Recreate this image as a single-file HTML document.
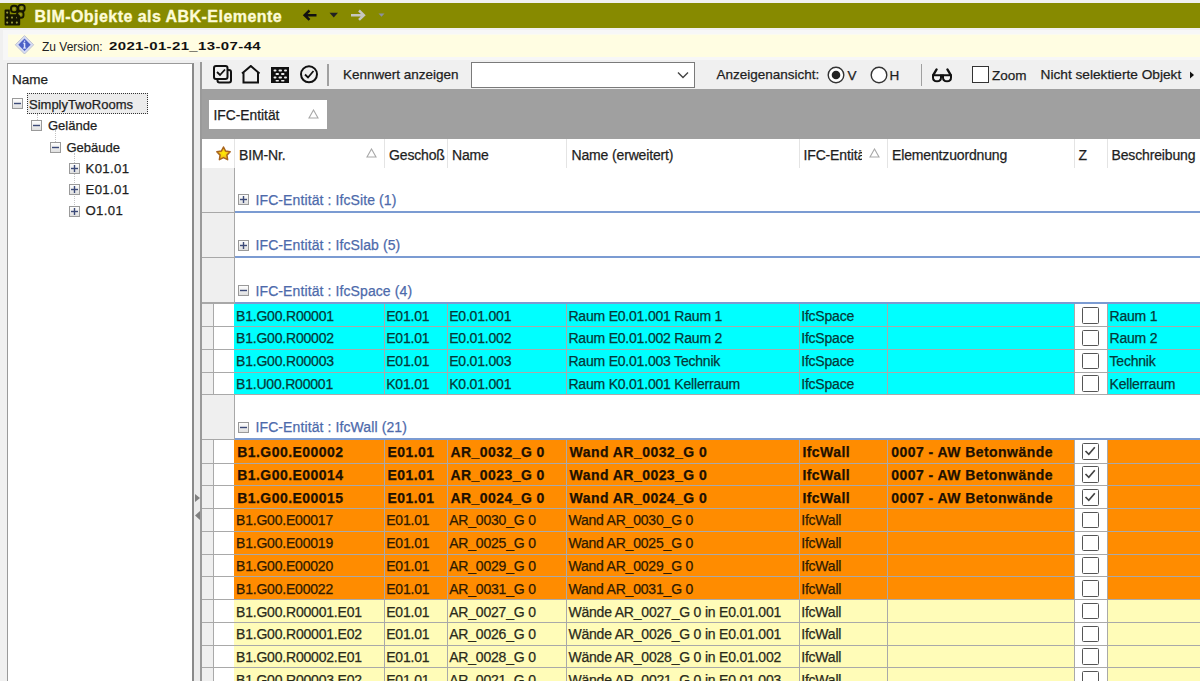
<!DOCTYPE html><html><head><meta charset='utf-8'><style>
*{margin:0;padding:0;box-sizing:border-box}
html,body{width:1200px;height:681px;overflow:hidden;background:#f0f0f0;font-family:"Liberation Sans", sans-serif;}
.a{position:absolute;white-space:nowrap}
.t{position:absolute;white-space:nowrap;font-size:13.5px;line-height:16px;color:#1e1e1e;-webkit-text-stroke:0.25px currentColor}
.hl{position:absolute;background:#a9a9a9;height:1px}
.vl{position:absolute;background:#a9a9a9;width:1px}
</style></head><body>
<div class='a' style='left:0;top:3px;width:1200px;height:24.5px;background:#878a00'></div>
<svg class='a' style='left:0;top:0' width='30' height='30' viewBox='0 0 30 30'>
<path d='M4.6 10.2 Q4.6 9.4 5.4 9.4 H9.8 V14.2 H19.4 Q20.2 14.2 20.2 15 V24.6 Q20.2 25.4 19.4 25.4 H5.4 Q4.6 25.4 4.6 24.6 Z' fill='#161600'/>
<g fill='#9a9c3a'><circle cx='7.2' cy='12.6' r='1.05'/><circle cx='7.2' cy='17.6' r='1.05'/><circle cx='12' cy='17.6' r='1.05'/><circle cx='16.8' cy='17.6' r='0.8'/>
<circle cx='7.2' cy='22.6' r='1.05'/><circle cx='12' cy='22.6' r='1.05'/><circle cx='16.8' cy='22.6' r='1.05'/></g>
<g fill='none' stroke='#161600' stroke-width='1.9'><rect x='11' y='5.7' width='6.4' height='6.4' rx='2.6'/><rect x='18.3' y='4.9' width='6.4' height='6.4' rx='2.6'/><rect x='17.1' y='11.4' width='6.4' height='6.4' rx='2.6'/></g>
<g fill='#9a9c3a'><circle cx='14.2' cy='8.9' r='1.1'/><circle cx='21.5' cy='8.1' r='1.1'/><circle cx='20.3' cy='14.6' r='1.1'/></g>
</svg>
<div class='a' style='left:34.5px;top:7px;font-size:16px;line-height:19px;font-weight:bold;color:#fdfbd6;letter-spacing:0.45px;-webkit-text-stroke:0.35px #fdfbd6'>BIM-Objekte als ABK-Elemente</div>
<svg class='a' style='left:300px;top:5px' width='90' height='20' viewBox='300 5 90 20'>
<path d='M304.5 15.2 H316.5 M309.5 10.5 L304.6 15.2 L309.5 19.9' stroke='#111' stroke-width='2.5' fill='none'/>
<path d='M329.5 12.8 H338 L333.75 17.6 Z' fill='#222'/>
<path d='M351 15.2 H364 M359 10.5 L363.9 15.2 L359 19.9' stroke='#c6c6c0' stroke-width='2.5' fill='none'/>
<path d='M378.5 13.5 H384.5 L381.5 16.8 Z' fill='#8c90a0'/>
</svg>
<div class='a' style='left:3px;top:29.5px;width:1197px;height:30px;background:#f7f7f7'></div>
<div class='a' style='left:7.5px;top:34px;width:1192.5px;height:22.5px;background:#fffde2;border-top:1px solid #fbfbf0'></div>
<svg class='a' style='left:0;top:30px' width='40' height='30' viewBox='0 30 40 30'>
<path d='M24.5 35.6 L33.7 44.8 L24.5 54 L15.3 44.8 Z' fill='#d6dcf4' stroke='#b4b8c8' stroke-width='0.8'/>
<path d='M24.5 38.6 L30.7 44.8 L24.5 51 L18.3 44.8 Z' fill='#4b60c6'/>
<rect x='23.8' y='43' width='1.5' height='5.2' fill='#dfe6ff'/><rect x='22.9' y='42.6' width='2.2' height='1' fill='#dfe6ff'/><rect x='23' y='47.6' width='3.2' height='1' fill='#dfe6ff'/><rect x='23.9' y='40.6' width='1.3' height='1.2' fill='#dfe6ff'/>
</svg>
<div class='a' style='left:42px;top:39.5px;font-size:12px;line-height:14px;color:#222'>Zu Version:</div>
<div class='a' style='left:109px;top:38px;font-size:11.5px;line-height:16px;font-weight:bold;color:#111;letter-spacing:0.3px;transform:scaleX(1.3);transform-origin:0 0'>2021-01-21_13-07-44</div>
<div class='a' style='left:7px;top:62.5px;width:186.5px;height:640px;background:#fff;border:1px solid #9a9a9a;border-right:2px solid #8a8a8a'></div>
<div class='t' style='left:12px;top:71.5px;font-size:13.5px'>Name</div>
<div class='a' style='left:36.5px;top:114px;width:0;height:6px;border-left:1px dotted #c4c4c4'></div>
<div class='a' style='left:55px;top:130px;width:0;height:12px;border-left:1px dotted #c4c4c4'></div>
<div class='a' style='left:74px;top:153px;width:0;height:58px;border-left:1px dotted #c4c4c4'></div>
<svg class='a' style='left:12px;top:98px' width='11' height='11' viewBox='0 0 11 11'><defs><linearGradient id='gb' x1='0' y1='0' x2='0' y2='1'><stop offset='0' stop-color='#fff'/><stop offset='1' stop-color='#dedede'/></linearGradient></defs><rect x='0.5' y='0.5' width='10' height='10' fill='url(#gb)' stroke='#9a9a9a'/><rect x='2' y='4.8' width='7' height='1.4' fill='#3c4a78'/></svg>
<div class='a' style='left:27px;top:93px;width:121px;height:21px;border:1px dotted #333;background:#ececec'></div>
<div class='t' style='left:29px;top:96.5px;font-size:13px'>SimplyTwoRooms</div>
<svg class='a' style='left:31px;top:120px' width='11' height='11' viewBox='0 0 11 11'><defs><linearGradient id='gb' x1='0' y1='0' x2='0' y2='1'><stop offset='0' stop-color='#fff'/><stop offset='1' stop-color='#dedede'/></linearGradient></defs><rect x='0.5' y='0.5' width='10' height='10' fill='url(#gb)' stroke='#9a9a9a'/><rect x='2' y='4.8' width='7' height='1.4' fill='#3c4a78'/></svg>
<div class='t' style='left:48px;top:117.5px;font-size:13px'>Gelände</div>
<svg class='a' style='left:50px;top:142px' width='11' height='11' viewBox='0 0 11 11'><defs><linearGradient id='gb' x1='0' y1='0' x2='0' y2='1'><stop offset='0' stop-color='#fff'/><stop offset='1' stop-color='#dedede'/></linearGradient></defs><rect x='0.5' y='0.5' width='10' height='10' fill='url(#gb)' stroke='#9a9a9a'/><rect x='2' y='4.8' width='7' height='1.4' fill='#3c4a78'/></svg>
<div class='t' style='left:66.5px;top:139.5px;font-size:13px'>Gebäude</div>
<svg class='a' style='left:69px;top:163px' width='11' height='11' viewBox='0 0 11 11'><defs><linearGradient id='gb' x1='0' y1='0' x2='0' y2='1'><stop offset='0' stop-color='#fff'/><stop offset='1' stop-color='#dedede'/></linearGradient></defs><rect x='0.5' y='0.5' width='10' height='10' fill='url(#gb)' stroke='#9a9a9a'/><rect x='2' y='4.8' width='7' height='1.4' fill='#3c4a78'/><rect x='4.8' y='2' width='1.4' height='7' fill='#3c4a78'/></svg>
<div class='t' style='left:85.5px;top:160.8px;font-size:13.2px;letter-spacing:0.35px'>K01.01</div>
<svg class='a' style='left:69px;top:184px' width='11' height='11' viewBox='0 0 11 11'><defs><linearGradient id='gb' x1='0' y1='0' x2='0' y2='1'><stop offset='0' stop-color='#fff'/><stop offset='1' stop-color='#dedede'/></linearGradient></defs><rect x='0.5' y='0.5' width='10' height='10' fill='url(#gb)' stroke='#9a9a9a'/><rect x='2' y='4.8' width='7' height='1.4' fill='#3c4a78'/><rect x='4.8' y='2' width='1.4' height='7' fill='#3c4a78'/></svg>
<div class='t' style='left:85.5px;top:182.10000000000002px;font-size:13.2px;letter-spacing:0.35px'>E01.01</div>
<svg class='a' style='left:69px;top:206px' width='11' height='11' viewBox='0 0 11 11'><defs><linearGradient id='gb' x1='0' y1='0' x2='0' y2='1'><stop offset='0' stop-color='#fff'/><stop offset='1' stop-color='#dedede'/></linearGradient></defs><rect x='0.5' y='0.5' width='10' height='10' fill='url(#gb)' stroke='#9a9a9a'/><rect x='2' y='4.8' width='7' height='1.4' fill='#3c4a78'/><rect x='4.8' y='2' width='1.4' height='7' fill='#3c4a78'/></svg>
<div class='t' style='left:85.5px;top:203.4px;font-size:13.2px;letter-spacing:0.35px'>O1.01</div>
<div class='a' style='left:193.5px;top:62px;width:6.5px;height:619px;background:#ececec'></div>
<svg class='a' style='left:194px;top:493px' width='7' height='28' viewBox='0 0 7 28'>
<path d='M1 1 L6 5 L1 9 Z' fill='#808080'/><path d='M6 18 L1 22.5 L6 27 Z' fill='#808080'/></svg>
<div class='a' style='left:199.8px;top:62px;width:2px;height:619px;background:#9a9a9a'></div>
<div class='a' style='left:202px;top:62px;width:998px;height:26.5px;background:#f0f0f0'></div>
<svg class='a' style='left:213px;top:65px' width='110' height='19' viewBox='0 0 110 19'>
<rect x='4.5' y='5' width='13.5' height='12.5' rx='2' fill='none' stroke='#111' stroke-width='2'/>
<rect x='1' y='1' width='13.5' height='13' rx='2' fill='#f0f0f0' stroke='#111' stroke-width='2'/>
<path d='M4 7 L7 10 L12 4.5' fill='none' stroke='#111' stroke-width='1.8'/>
<path d='M29 8.5 L37.8 1 L46.5 8.5 M30.5 7.5 V17.5 H45 V7.5' fill='none' stroke='#111' stroke-width='2'/>
<rect x='58' y='2' width='18' height='16' fill='#111'/>
<g fill='#f0f0f0'><rect x='60.5' y='4.5' width='3' height='2' rx='1'/><rect x='65.5' y='4.5' width='3.5' height='2' rx='1'/><rect x='71' y='4.5' width='3' height='2' rx='1'/>
<rect x='62.5' y='8' width='3.5' height='2' rx='1'/><rect x='68' y='8' width='3.5' height='2' rx='1'/>
<rect x='60.5' y='11.5' width='3' height='2' rx='1'/><rect x='65.5' y='11.5' width='3.5' height='2' rx='1'/><rect x='71' y='11.5' width='3' height='2' rx='1'/>
<rect x='62.5' y='15' width='3.5' height='1.6' rx='0.8'/><rect x='68' y='15' width='3.5' height='1.6' rx='0.8'/></g>
<circle cx='96' cy='9.3' r='8' fill='none' stroke='#111' stroke-width='2'/>
<path d='M92 9.5 L95 12.5 L100.5 6' fill='none' stroke='#111' stroke-width='1.8'/>
</svg>
<div class='a' style='left:327px;top:64px;width:1.5px;height:22px;background:#a0a0a0'></div>
<div class='t' style='left:343px;top:67px;font-size:13.5px'>Kennwert anzeigen</div>
<div class='a' style='left:470.5px;top:62px;width:224px;height:25.5px;background:#fff;border:1px solid #7a7a7a'></div>
<svg class='a' style='left:677px;top:71px' width='12' height='8' viewBox='0 0 12 8'><path d='M1 1.5 L6 6.5 L11 1.5' fill='none' stroke='#444' stroke-width='1.4'/></svg>
<div class='t' style='left:716.5px;top:67px;font-size:13.5px'>Anzeigenansicht:</div>
<svg class='a' style='left:827px;top:65.5px' width='18' height='18' viewBox='0 0 18 18'><circle cx='9' cy='9' r='7.8' fill='#fff' stroke='#333' stroke-width='1.4'/><circle cx='9' cy='9' r='4.3' fill='#222'/></svg>
<div class='t' style='left:847.5px;top:67.5px;font-size:13.5px'>V</div>
<svg class='a' style='left:869.5px;top:65.5px' width='18' height='18' viewBox='0 0 18 18'><circle cx='9' cy='9' r='7.8' fill='#fff' stroke='#333' stroke-width='1.4'/></svg>
<div class='t' style='left:889.5px;top:67.5px;font-size:13.5px'>H</div>
<div class='a' style='left:920.5px;top:64px;width:1.5px;height:22px;background:#a0a0a0'></div>
<svg class='a' style='left:926px;top:62px' width='32' height='26' viewBox='0 0 32 26'>
<path d='M10.6 7.4 L7.2 13.2 M21.4 7.4 L24.8 13.2' stroke='#111' stroke-width='2.3' stroke-linecap='round' fill='none'/>
<path d='M7 13.3 H15 V15.4 Q15 19.2 11 19.2 Q7 19.2 7 15.4 Z M17 13.3 H25 V15.4 Q25 19.2 21 19.2 Q17 19.2 17 15.4 Z' stroke='#111' stroke-width='2' fill='#f4f4f4' stroke-linejoin='round'/>
<path d='M14.5 13.6 H17.5' stroke='#111' stroke-width='2.6'/>
</svg>
<div class='a' style='left:972px;top:66px;width:16.5px;height:16.5px;background:#fff;border:1.5px solid #333'></div>
<div class='t' style='left:992px;top:67.5px;font-size:13.5px'>Zoom</div>
<div class='t' style='left:1040.5px;top:67px;font-size:13.7px'>Nicht selektierte Objekt</div>
<svg class='a' style='left:1189px;top:71px' width='6' height='8' viewBox='0 0 6 8'><path d='M1 0.5 L5 4 L1 7.5 Z' fill='#111'/></svg>
<div class='a' style='left:202px;top:88.5px;width:998px;height:50px;background:#a0a0a0'></div>
<div class='a' style='left:209px;top:100px;width:117.5px;height:28.5px;background:#fff'></div>
<div class='t' style='left:213.5px;top:107.5px;font-size:13.8px'>IFC-Entität</div>
<svg class='a' style='left:308px;top:109px' width='11' height='10' viewBox='0 0 11 10'><path d='M5.5 1 L10 9 H1 Z' fill='none' stroke='#a8a8a8' stroke-width='1.1'/></svg>
<div class='a' style='left:202px;top:138.5px;width:998px;height:30px;background:#fff'></div>
<svg class='a' style='left:216px;top:145.5px' width='15' height='15' viewBox='0 0 15 15'><defs><radialGradient id='sg' cx='0.5' cy='0.5' r='0.5'><stop offset='0' stop-color='#ffee00'/><stop offset='1' stop-color='#f0b020'/></radialGradient></defs><path d='M7.50 1.00 L9.62 5.09 L14.16 5.84 L10.92 9.11 L11.61 13.66 L7.50 11.60 L3.39 13.66 L4.08 9.11 L0.84 5.84 L5.38 5.09 Z' fill='url(#sg)' stroke='#a8641e' stroke-width='1.5' stroke-linejoin='round'/></svg>
<div class='a' style='left:233.5px;top:138.5px;width:1px;height:29.5px;background:#e4e4e4'></div>
<div class='a' style='left:384.2px;top:138.5px;width:1px;height:29.5px;background:#e4e4e4'></div>
<div class='a' style='left:447px;top:138.5px;width:1px;height:29.5px;background:#e4e4e4'></div>
<div class='a' style='left:566px;top:138.5px;width:1px;height:29.5px;background:#e4e4e4'></div>
<div class='a' style='left:798.5px;top:138.5px;width:1px;height:29.5px;background:#e4e4e4'></div>
<div class='a' style='left:886.7px;top:138.5px;width:1px;height:29.5px;background:#e4e4e4'></div>
<div class='a' style='left:1074px;top:138.5px;width:1px;height:29.5px;background:#e4e4e4'></div>
<div class='a' style='left:1106.7px;top:138.5px;width:1px;height:29.5px;background:#e4e4e4'></div>
<div class='t' style='left:239px;top:146.5px;font-size:14px;letter-spacing:-0.15px'>BIM-Nr.</div>
<div class='t' style='left:389px;top:146.5px;font-size:14px;letter-spacing:-0.15px'>Geschoß</div>
<div class='t' style='left:452px;top:146.5px;font-size:14px;letter-spacing:-0.15px'>Name</div>
<div class='t' style='left:571.5px;top:146.5px;font-size:14px;letter-spacing:-0.15px'>Name (erweitert)</div>
<div class='t' style='left:803.5px;top:146.5px;width:58.5px;overflow:hidden;font-size:14px;letter-spacing:-0.15px'>IFC-Entitä</div>
<div class='t' style='left:892px;top:146.5px;font-size:14px;letter-spacing:-0.15px'>Elementzuordnung</div>
<div class='t' style='left:1078.5px;top:146.5px;font-size:14px;letter-spacing:-0.15px'>Z</div>
<div class='t' style='left:1111.5px;top:146.5px;font-size:14px;letter-spacing:-0.15px'>Beschreibung</div>
<svg class='a' style='left:366px;top:148px' width='11' height='10' viewBox='0 0 11 10'><path d='M5.5 1 L10 9 H1 Z' fill='none' stroke='#a8a8a8' stroke-width='1.1'/></svg>
<svg class='a' style='left:868.5px;top:148px' width='11' height='10' viewBox='0 0 11 10'><path d='M5.5 1 L10 9 H1 Z' fill='none' stroke='#a8a8a8' stroke-width='1.1'/></svg>
<div class='a' style='left:202px;top:167.6px;width:998px;height:513.4px;background:#fff'></div>
<div class='a' style='left:202px;top:167.6px;width:31.5px;height:45.4px;background:#efefef'></div>
<div class='a' style='left:233.5px;top:167.6px;width:1px;height:45.4px;background:#a8a8a8'></div>
<div class='a' style='left:202px;top:211.6px;width:31.5px;height:1.2px;background:#a8a8a8'></div>
<div class='a' style='left:234.5px;top:210.8px;width:966px;height:2px;background:#7b9bd2'></div>
<svg class='a' style='left:238px;top:194px' width='11' height='11' viewBox='0 0 11 11'><defs><linearGradient id='gb' x1='0' y1='0' x2='0' y2='1'><stop offset='0' stop-color='#fff'/><stop offset='1' stop-color='#dedede'/></linearGradient></defs><rect x='0.5' y='0.5' width='10' height='10' fill='url(#gb)' stroke='#9a9a9a'/><rect x='2' y='4.8' width='7' height='1.4' fill='#3c4a78'/><rect x='4.8' y='2' width='1.4' height='7' fill='#3c4a78'/></svg>
<div class='t' style='left:255.5px;top:192.0px;font-size:14px;letter-spacing:0.1px;color:#4d6aab'>IFC-Entität : IfcSite (1)</div>
<div class='a' style='left:202px;top:213.0px;width:31.5px;height:45.4px;background:#efefef'></div>
<div class='a' style='left:233.5px;top:213.0px;width:1px;height:45.4px;background:#a8a8a8'></div>
<div class='a' style='left:202px;top:257.0px;width:31.5px;height:1.2px;background:#a8a8a8'></div>
<div class='a' style='left:234.5px;top:256.2px;width:966px;height:2px;background:#7b9bd2'></div>
<svg class='a' style='left:238px;top:240px' width='11' height='11' viewBox='0 0 11 11'><defs><linearGradient id='gb' x1='0' y1='0' x2='0' y2='1'><stop offset='0' stop-color='#fff'/><stop offset='1' stop-color='#dedede'/></linearGradient></defs><rect x='0.5' y='0.5' width='10' height='10' fill='url(#gb)' stroke='#9a9a9a'/><rect x='2' y='4.8' width='7' height='1.4' fill='#3c4a78'/><rect x='4.8' y='2' width='1.4' height='7' fill='#3c4a78'/></svg>
<div class='t' style='left:255.5px;top:237.39999999999998px;font-size:14px;letter-spacing:0.1px;color:#4d6aab'>IFC-Entität : IfcSlab (5)</div>
<div class='a' style='left:202px;top:258.4px;width:31.5px;height:45.4px;background:#efefef'></div>
<div class='a' style='left:233.5px;top:258.4px;width:1px;height:45.4px;background:#a8a8a8'></div>
<div class='a' style='left:202px;top:302.4px;width:31.5px;height:1.2px;background:#a8a8a8'></div>
<div class='a' style='left:234.5px;top:301.59999999999997px;width:966px;height:2px;background:#7b9bd2'></div>
<svg class='a' style='left:238px;top:285px' width='11' height='11' viewBox='0 0 11 11'><defs><linearGradient id='gb' x1='0' y1='0' x2='0' y2='1'><stop offset='0' stop-color='#fff'/><stop offset='1' stop-color='#dedede'/></linearGradient></defs><rect x='0.5' y='0.5' width='10' height='10' fill='url(#gb)' stroke='#9a9a9a'/><rect x='2' y='4.8' width='7' height='1.4' fill='#3c4a78'/></svg>
<div class='t' style='left:255.5px;top:282.79999999999995px;font-size:14px;letter-spacing:0.1px;color:#4d6aab'>IFC-Entität : IfcSpace (4)</div>
<div class='a' style='left:202px;top:303.79999999999995px;width:11px;height:22.77px;background:#efefef'></div>
<div class='a' style='left:213px;top:303.79999999999995px;width:1px;height:22.77px;background:#a9a9a9'></div>
<div class='a' style='left:214px;top:303.79999999999995px;width:20px;height:22.77px;background:#fff'></div>
<div class='a' style='left:233.8px;top:303.79999999999995px;width:967px;height:22.77px;background:#00ffff'></div>
<div class='a' style='left:1074.5px;top:303.79999999999995px;width:32px;height:22.77px;background:#fff'></div>
<div class='a' style='left:384.2px;top:303.79999999999995px;width:1px;height:22.77px;background:#a9a9a9'></div>
<div class='a' style='left:447px;top:303.79999999999995px;width:1px;height:22.77px;background:#a9a9a9'></div>
<div class='a' style='left:566px;top:303.79999999999995px;width:1px;height:22.77px;background:#a9a9a9'></div>
<div class='a' style='left:798.5px;top:303.79999999999995px;width:1px;height:22.77px;background:#a9a9a9'></div>
<div class='a' style='left:886.7px;top:303.79999999999995px;width:1px;height:22.77px;background:#a9a9a9'></div>
<div class='a' style='left:1074px;top:303.79999999999995px;width:1px;height:22.77px;background:#a9a9a9'></div>
<div class='a' style='left:1106.7px;top:303.79999999999995px;width:1px;height:22.77px;background:#a9a9a9'></div>
<div class='t' style='left:236px;top:307.69999999999993px;font-size:14px;letter-spacing:-0.2px;color:#063838'>B1.G00.R00001</div>
<div class='t' style='left:386.2px;top:307.69999999999993px;font-size:14px;letter-spacing:-0.2px;color:#063838'>E01.01</div>
<div class='t' style='left:449.2px;top:307.69999999999993px;font-size:14px;letter-spacing:-0.2px;color:#063838'>E0.01.001</div>
<div class='t' style='left:568.4px;top:307.69999999999993px;font-size:14px;letter-spacing:-0.2px;color:#063838'>Raum E0.01.001 Raum 1</div>
<div class='t' style='left:801.2px;top:307.69999999999993px;font-size:14px;letter-spacing:-0.2px;color:#063838'>IfcSpace</div>
<div class='t' style='left:1109.5px;top:307.69999999999993px;font-size:14px;letter-spacing:-0.2px;color:#063838'>Raum 1</div>
<div class='a' style='left:1082.3px;top:306.99999999999994px;width:16.5px;height:16.5px;border:1.6px solid #555;border-radius:1.5px;background:#fff'></div>
<div class='a' style='left:202px;top:326.56999999999994px;width:11px;height:22.77px;background:#efefef'></div>
<div class='a' style='left:213px;top:326.56999999999994px;width:1px;height:22.77px;background:#a9a9a9'></div>
<div class='a' style='left:214px;top:326.56999999999994px;width:20px;height:22.77px;background:#fff'></div>
<div class='a' style='left:233.8px;top:326.56999999999994px;width:967px;height:22.77px;background:#00ffff'></div>
<div class='a' style='left:1074.5px;top:326.56999999999994px;width:32px;height:22.77px;background:#fff'></div>
<div class='a' style='left:384.2px;top:326.56999999999994px;width:1px;height:22.77px;background:#a9a9a9'></div>
<div class='a' style='left:447px;top:326.56999999999994px;width:1px;height:22.77px;background:#a9a9a9'></div>
<div class='a' style='left:566px;top:326.56999999999994px;width:1px;height:22.77px;background:#a9a9a9'></div>
<div class='a' style='left:798.5px;top:326.56999999999994px;width:1px;height:22.77px;background:#a9a9a9'></div>
<div class='a' style='left:886.7px;top:326.56999999999994px;width:1px;height:22.77px;background:#a9a9a9'></div>
<div class='a' style='left:1074px;top:326.56999999999994px;width:1px;height:22.77px;background:#a9a9a9'></div>
<div class='a' style='left:1106.7px;top:326.56999999999994px;width:1px;height:22.77px;background:#a9a9a9'></div>
<div class='t' style='left:236px;top:330.4699999999999px;font-size:14px;letter-spacing:-0.2px;color:#063838'>B1.G00.R00002</div>
<div class='t' style='left:386.2px;top:330.4699999999999px;font-size:14px;letter-spacing:-0.2px;color:#063838'>E01.01</div>
<div class='t' style='left:449.2px;top:330.4699999999999px;font-size:14px;letter-spacing:-0.2px;color:#063838'>E0.01.002</div>
<div class='t' style='left:568.4px;top:330.4699999999999px;font-size:14px;letter-spacing:-0.2px;color:#063838'>Raum E0.01.002 Raum 2</div>
<div class='t' style='left:801.2px;top:330.4699999999999px;font-size:14px;letter-spacing:-0.2px;color:#063838'>IfcSpace</div>
<div class='t' style='left:1109.5px;top:330.4699999999999px;font-size:14px;letter-spacing:-0.2px;color:#063838'>Raum 2</div>
<div class='a' style='left:1082.3px;top:329.7699999999999px;width:16.5px;height:16.5px;border:1.6px solid #555;border-radius:1.5px;background:#fff'></div>
<div class='a' style='left:202px;top:349.3399999999999px;width:11px;height:22.77px;background:#efefef'></div>
<div class='a' style='left:213px;top:349.3399999999999px;width:1px;height:22.77px;background:#a9a9a9'></div>
<div class='a' style='left:214px;top:349.3399999999999px;width:20px;height:22.77px;background:#fff'></div>
<div class='a' style='left:233.8px;top:349.3399999999999px;width:967px;height:22.77px;background:#00ffff'></div>
<div class='a' style='left:1074.5px;top:349.3399999999999px;width:32px;height:22.77px;background:#fff'></div>
<div class='a' style='left:384.2px;top:349.3399999999999px;width:1px;height:22.77px;background:#a9a9a9'></div>
<div class='a' style='left:447px;top:349.3399999999999px;width:1px;height:22.77px;background:#a9a9a9'></div>
<div class='a' style='left:566px;top:349.3399999999999px;width:1px;height:22.77px;background:#a9a9a9'></div>
<div class='a' style='left:798.5px;top:349.3399999999999px;width:1px;height:22.77px;background:#a9a9a9'></div>
<div class='a' style='left:886.7px;top:349.3399999999999px;width:1px;height:22.77px;background:#a9a9a9'></div>
<div class='a' style='left:1074px;top:349.3399999999999px;width:1px;height:22.77px;background:#a9a9a9'></div>
<div class='a' style='left:1106.7px;top:349.3399999999999px;width:1px;height:22.77px;background:#a9a9a9'></div>
<div class='t' style='left:236px;top:353.2399999999999px;font-size:14px;letter-spacing:-0.2px;color:#063838'>B1.G00.R00003</div>
<div class='t' style='left:386.2px;top:353.2399999999999px;font-size:14px;letter-spacing:-0.2px;color:#063838'>E01.01</div>
<div class='t' style='left:449.2px;top:353.2399999999999px;font-size:14px;letter-spacing:-0.2px;color:#063838'>E0.01.003</div>
<div class='t' style='left:568.4px;top:353.2399999999999px;font-size:14px;letter-spacing:-0.2px;color:#063838'>Raum E0.01.003 Technik</div>
<div class='t' style='left:801.2px;top:353.2399999999999px;font-size:14px;letter-spacing:-0.2px;color:#063838'>IfcSpace</div>
<div class='t' style='left:1109.5px;top:353.2399999999999px;font-size:14px;letter-spacing:-0.2px;color:#063838'>Technik</div>
<div class='a' style='left:1082.3px;top:352.5399999999999px;width:16.5px;height:16.5px;border:1.6px solid #555;border-radius:1.5px;background:#fff'></div>
<div class='a' style='left:202px;top:372.1099999999999px;width:11px;height:22.77px;background:#efefef'></div>
<div class='a' style='left:213px;top:372.1099999999999px;width:1px;height:22.77px;background:#a9a9a9'></div>
<div class='a' style='left:214px;top:372.1099999999999px;width:20px;height:22.77px;background:#fff'></div>
<div class='a' style='left:233.8px;top:372.1099999999999px;width:967px;height:22.77px;background:#00ffff'></div>
<div class='a' style='left:1074.5px;top:372.1099999999999px;width:32px;height:22.77px;background:#fff'></div>
<div class='a' style='left:384.2px;top:372.1099999999999px;width:1px;height:22.77px;background:#a9a9a9'></div>
<div class='a' style='left:447px;top:372.1099999999999px;width:1px;height:22.77px;background:#a9a9a9'></div>
<div class='a' style='left:566px;top:372.1099999999999px;width:1px;height:22.77px;background:#a9a9a9'></div>
<div class='a' style='left:798.5px;top:372.1099999999999px;width:1px;height:22.77px;background:#a9a9a9'></div>
<div class='a' style='left:886.7px;top:372.1099999999999px;width:1px;height:22.77px;background:#a9a9a9'></div>
<div class='a' style='left:1074px;top:372.1099999999999px;width:1px;height:22.77px;background:#a9a9a9'></div>
<div class='a' style='left:1106.7px;top:372.1099999999999px;width:1px;height:22.77px;background:#a9a9a9'></div>
<div class='t' style='left:236px;top:376.0099999999999px;font-size:14px;letter-spacing:-0.2px;color:#063838'>B1.U00.R00001</div>
<div class='t' style='left:386.2px;top:376.0099999999999px;font-size:14px;letter-spacing:-0.2px;color:#063838'>K01.01</div>
<div class='t' style='left:449.2px;top:376.0099999999999px;font-size:14px;letter-spacing:-0.2px;color:#063838'>K0.01.001</div>
<div class='t' style='left:568.4px;top:376.0099999999999px;font-size:14px;letter-spacing:-0.2px;color:#063838'>Raum K0.01.001 Kellerraum</div>
<div class='t' style='left:801.2px;top:376.0099999999999px;font-size:14px;letter-spacing:-0.2px;color:#063838'>IfcSpace</div>
<div class='t' style='left:1109.5px;top:376.0099999999999px;font-size:14px;letter-spacing:-0.2px;color:#063838'>Kellerraum</div>
<div class='a' style='left:1082.3px;top:375.3099999999999px;width:16.5px;height:16.5px;border:1.6px solid #555;border-radius:1.5px;background:#fff'></div>
<div class='a' style='left:202px;top:394.8799999999999px;width:31.5px;height:45.4px;background:#efefef'></div>
<div class='a' style='left:233.5px;top:394.8799999999999px;width:1px;height:45.4px;background:#a8a8a8'></div>
<div class='a' style='left:202px;top:438.8799999999999px;width:31.5px;height:1.2px;background:#a8a8a8'></div>
<div class='a' style='left:234.5px;top:438.07999999999987px;width:966px;height:2px;background:#7b9bd2'></div>
<svg class='a' style='left:238px;top:422px' width='11' height='11' viewBox='0 0 11 11'><defs><linearGradient id='gb' x1='0' y1='0' x2='0' y2='1'><stop offset='0' stop-color='#fff'/><stop offset='1' stop-color='#dedede'/></linearGradient></defs><rect x='0.5' y='0.5' width='10' height='10' fill='url(#gb)' stroke='#9a9a9a'/><rect x='2' y='4.8' width='7' height='1.4' fill='#3c4a78'/></svg>
<div class='t' style='left:255.5px;top:419.27999999999986px;font-size:14px;letter-spacing:0.1px;color:#4d6aab'>IFC-Entität : IfcWall (21)</div>
<div class='a' style='left:202px;top:440.27999999999986px;width:11px;height:22.77px;background:#efefef'></div>
<div class='a' style='left:213px;top:440.27999999999986px;width:1px;height:22.77px;background:#a9a9a9'></div>
<div class='a' style='left:214px;top:440.27999999999986px;width:20px;height:22.77px;background:#fff'></div>
<div class='a' style='left:233.8px;top:440.27999999999986px;width:967px;height:22.77px;background:#ff8c00'></div>
<div class='a' style='left:1074.5px;top:440.27999999999986px;width:32px;height:22.77px;background:#fff'></div>
<div class='a' style='left:384.2px;top:440.27999999999986px;width:1px;height:22.77px;background:#a9a9a9'></div>
<div class='a' style='left:447px;top:440.27999999999986px;width:1px;height:22.77px;background:#a9a9a9'></div>
<div class='a' style='left:566px;top:440.27999999999986px;width:1px;height:22.77px;background:#a9a9a9'></div>
<div class='a' style='left:798.5px;top:440.27999999999986px;width:1px;height:22.77px;background:#a9a9a9'></div>
<div class='a' style='left:886.7px;top:440.27999999999986px;width:1px;height:22.77px;background:#a9a9a9'></div>
<div class='a' style='left:1074px;top:440.27999999999986px;width:1px;height:22.77px;background:#a9a9a9'></div>
<div class='a' style='left:1106.7px;top:440.27999999999986px;width:1px;height:22.77px;background:#a9a9a9'></div>
<div class='t' style='left:237.2px;top:444.17999999999984px;font-weight:bold;font-size:14px;letter-spacing:0.45px;color:#1e1000'>B1.G00.E00002</div>
<div class='t' style='left:387.4px;top:444.17999999999984px;font-weight:bold;font-size:14px;letter-spacing:0.45px;color:#1e1000'>E01.01</div>
<div class='t' style='left:450.4px;top:444.17999999999984px;font-weight:bold;font-size:14px;letter-spacing:0.45px;color:#1e1000'>AR_0032_G 0</div>
<div class='t' style='left:569.6px;top:444.17999999999984px;font-weight:bold;font-size:14px;letter-spacing:0.45px;color:#1e1000'>Wand AR_0032_G 0</div>
<div class='t' style='left:802.4000000000001px;top:444.17999999999984px;font-weight:bold;font-size:14px;letter-spacing:0.45px;color:#1e1000'>IfcWall</div>
<div class='t' style='left:891.2px;top:444.17999999999984px;font-weight:bold;font-size:14px;letter-spacing:0.45px;color:#1e1000'>0007 - AW Betonwände</div>
<div class='a' style='left:1082.3px;top:443.47999999999985px;width:16.5px;height:16.5px;border:1.6px solid #555;border-radius:1.5px;background:#fff'></div>
<svg class='a' style='left:1082.3px;top:443.47999999999985px' width='16' height='16' viewBox='0 0 16 16'><path d='M3.5 8 L6.8 11.3 L12.8 4.3' fill='none' stroke='#444' stroke-width='1.7'/></svg>
<div class='a' style='left:202px;top:463.04999999999984px;width:11px;height:22.77px;background:#efefef'></div>
<div class='a' style='left:213px;top:463.04999999999984px;width:1px;height:22.77px;background:#a9a9a9'></div>
<div class='a' style='left:214px;top:463.04999999999984px;width:20px;height:22.77px;background:#fff'></div>
<div class='a' style='left:233.8px;top:463.04999999999984px;width:967px;height:22.77px;background:#ff8c00'></div>
<div class='a' style='left:1074.5px;top:463.04999999999984px;width:32px;height:22.77px;background:#fff'></div>
<div class='a' style='left:384.2px;top:463.04999999999984px;width:1px;height:22.77px;background:#a9a9a9'></div>
<div class='a' style='left:447px;top:463.04999999999984px;width:1px;height:22.77px;background:#a9a9a9'></div>
<div class='a' style='left:566px;top:463.04999999999984px;width:1px;height:22.77px;background:#a9a9a9'></div>
<div class='a' style='left:798.5px;top:463.04999999999984px;width:1px;height:22.77px;background:#a9a9a9'></div>
<div class='a' style='left:886.7px;top:463.04999999999984px;width:1px;height:22.77px;background:#a9a9a9'></div>
<div class='a' style='left:1074px;top:463.04999999999984px;width:1px;height:22.77px;background:#a9a9a9'></div>
<div class='a' style='left:1106.7px;top:463.04999999999984px;width:1px;height:22.77px;background:#a9a9a9'></div>
<div class='t' style='left:237.2px;top:466.9499999999998px;font-weight:bold;font-size:14px;letter-spacing:0.45px;color:#1e1000'>B1.G00.E00014</div>
<div class='t' style='left:387.4px;top:466.9499999999998px;font-weight:bold;font-size:14px;letter-spacing:0.45px;color:#1e1000'>E01.01</div>
<div class='t' style='left:450.4px;top:466.9499999999998px;font-weight:bold;font-size:14px;letter-spacing:0.45px;color:#1e1000'>AR_0023_G 0</div>
<div class='t' style='left:569.6px;top:466.9499999999998px;font-weight:bold;font-size:14px;letter-spacing:0.45px;color:#1e1000'>Wand AR_0023_G 0</div>
<div class='t' style='left:802.4000000000001px;top:466.9499999999998px;font-weight:bold;font-size:14px;letter-spacing:0.45px;color:#1e1000'>IfcWall</div>
<div class='t' style='left:891.2px;top:466.9499999999998px;font-weight:bold;font-size:14px;letter-spacing:0.45px;color:#1e1000'>0007 - AW Betonwände</div>
<div class='a' style='left:1082.3px;top:466.24999999999983px;width:16.5px;height:16.5px;border:1.6px solid #555;border-radius:1.5px;background:#fff'></div>
<svg class='a' style='left:1082.3px;top:466.24999999999983px' width='16' height='16' viewBox='0 0 16 16'><path d='M3.5 8 L6.8 11.3 L12.8 4.3' fill='none' stroke='#444' stroke-width='1.7'/></svg>
<div class='a' style='left:202px;top:485.8199999999998px;width:11px;height:22.77px;background:#efefef'></div>
<div class='a' style='left:213px;top:485.8199999999998px;width:1px;height:22.77px;background:#a9a9a9'></div>
<div class='a' style='left:214px;top:485.8199999999998px;width:20px;height:22.77px;background:#fff'></div>
<div class='a' style='left:233.8px;top:485.8199999999998px;width:967px;height:22.77px;background:#ff8c00'></div>
<div class='a' style='left:1074.5px;top:485.8199999999998px;width:32px;height:22.77px;background:#fff'></div>
<div class='a' style='left:384.2px;top:485.8199999999998px;width:1px;height:22.77px;background:#a9a9a9'></div>
<div class='a' style='left:447px;top:485.8199999999998px;width:1px;height:22.77px;background:#a9a9a9'></div>
<div class='a' style='left:566px;top:485.8199999999998px;width:1px;height:22.77px;background:#a9a9a9'></div>
<div class='a' style='left:798.5px;top:485.8199999999998px;width:1px;height:22.77px;background:#a9a9a9'></div>
<div class='a' style='left:886.7px;top:485.8199999999998px;width:1px;height:22.77px;background:#a9a9a9'></div>
<div class='a' style='left:1074px;top:485.8199999999998px;width:1px;height:22.77px;background:#a9a9a9'></div>
<div class='a' style='left:1106.7px;top:485.8199999999998px;width:1px;height:22.77px;background:#a9a9a9'></div>
<div class='t' style='left:237.2px;top:489.7199999999998px;font-weight:bold;font-size:14px;letter-spacing:0.45px;color:#1e1000'>B1.G00.E00015</div>
<div class='t' style='left:387.4px;top:489.7199999999998px;font-weight:bold;font-size:14px;letter-spacing:0.45px;color:#1e1000'>E01.01</div>
<div class='t' style='left:450.4px;top:489.7199999999998px;font-weight:bold;font-size:14px;letter-spacing:0.45px;color:#1e1000'>AR_0024_G 0</div>
<div class='t' style='left:569.6px;top:489.7199999999998px;font-weight:bold;font-size:14px;letter-spacing:0.45px;color:#1e1000'>Wand AR_0024_G 0</div>
<div class='t' style='left:802.4000000000001px;top:489.7199999999998px;font-weight:bold;font-size:14px;letter-spacing:0.45px;color:#1e1000'>IfcWall</div>
<div class='t' style='left:891.2px;top:489.7199999999998px;font-weight:bold;font-size:14px;letter-spacing:0.45px;color:#1e1000'>0007 - AW Betonwände</div>
<div class='a' style='left:1082.3px;top:489.0199999999998px;width:16.5px;height:16.5px;border:1.6px solid #555;border-radius:1.5px;background:#fff'></div>
<svg class='a' style='left:1082.3px;top:489.0199999999998px' width='16' height='16' viewBox='0 0 16 16'><path d='M3.5 8 L6.8 11.3 L12.8 4.3' fill='none' stroke='#444' stroke-width='1.7'/></svg>
<div class='a' style='left:202px;top:508.5899999999998px;width:11px;height:22.77px;background:#efefef'></div>
<div class='a' style='left:213px;top:508.5899999999998px;width:1px;height:22.77px;background:#a9a9a9'></div>
<div class='a' style='left:214px;top:508.5899999999998px;width:20px;height:22.77px;background:#fff'></div>
<div class='a' style='left:233.8px;top:508.5899999999998px;width:967px;height:22.77px;background:#ff8c00'></div>
<div class='a' style='left:1074.5px;top:508.5899999999998px;width:32px;height:22.77px;background:#fff'></div>
<div class='a' style='left:384.2px;top:508.5899999999998px;width:1px;height:22.77px;background:#a9a9a9'></div>
<div class='a' style='left:447px;top:508.5899999999998px;width:1px;height:22.77px;background:#a9a9a9'></div>
<div class='a' style='left:566px;top:508.5899999999998px;width:1px;height:22.77px;background:#a9a9a9'></div>
<div class='a' style='left:798.5px;top:508.5899999999998px;width:1px;height:22.77px;background:#a9a9a9'></div>
<div class='a' style='left:886.7px;top:508.5899999999998px;width:1px;height:22.77px;background:#a9a9a9'></div>
<div class='a' style='left:1074px;top:508.5899999999998px;width:1px;height:22.77px;background:#a9a9a9'></div>
<div class='a' style='left:1106.7px;top:508.5899999999998px;width:1px;height:22.77px;background:#a9a9a9'></div>
<div class='t' style='left:236px;top:512.4899999999998px;font-size:14px;letter-spacing:-0.2px;color:#2e1a00'>B1.G00.E00017</div>
<div class='t' style='left:386.2px;top:512.4899999999998px;font-size:14px;letter-spacing:-0.2px;color:#2e1a00'>E01.01</div>
<div class='t' style='left:449.2px;top:512.4899999999998px;font-size:14px;letter-spacing:-0.2px;color:#2e1a00'>AR_0030_G 0</div>
<div class='t' style='left:568.4px;top:512.4899999999998px;font-size:14px;letter-spacing:-0.2px;color:#2e1a00'>Wand AR_0030_G 0</div>
<div class='t' style='left:801.2px;top:512.4899999999998px;font-size:14px;letter-spacing:-0.2px;color:#2e1a00'>IfcWall</div>
<div class='a' style='left:1082.3px;top:511.7899999999998px;width:16.5px;height:16.5px;border:1.6px solid #555;border-radius:1.5px;background:#fff'></div>
<div class='a' style='left:202px;top:531.3599999999998px;width:11px;height:22.77px;background:#efefef'></div>
<div class='a' style='left:213px;top:531.3599999999998px;width:1px;height:22.77px;background:#a9a9a9'></div>
<div class='a' style='left:214px;top:531.3599999999998px;width:20px;height:22.77px;background:#fff'></div>
<div class='a' style='left:233.8px;top:531.3599999999998px;width:967px;height:22.77px;background:#ff8c00'></div>
<div class='a' style='left:1074.5px;top:531.3599999999998px;width:32px;height:22.77px;background:#fff'></div>
<div class='a' style='left:384.2px;top:531.3599999999998px;width:1px;height:22.77px;background:#a9a9a9'></div>
<div class='a' style='left:447px;top:531.3599999999998px;width:1px;height:22.77px;background:#a9a9a9'></div>
<div class='a' style='left:566px;top:531.3599999999998px;width:1px;height:22.77px;background:#a9a9a9'></div>
<div class='a' style='left:798.5px;top:531.3599999999998px;width:1px;height:22.77px;background:#a9a9a9'></div>
<div class='a' style='left:886.7px;top:531.3599999999998px;width:1px;height:22.77px;background:#a9a9a9'></div>
<div class='a' style='left:1074px;top:531.3599999999998px;width:1px;height:22.77px;background:#a9a9a9'></div>
<div class='a' style='left:1106.7px;top:531.3599999999998px;width:1px;height:22.77px;background:#a9a9a9'></div>
<div class='t' style='left:236px;top:535.2599999999998px;font-size:14px;letter-spacing:-0.2px;color:#2e1a00'>B1.G00.E00019</div>
<div class='t' style='left:386.2px;top:535.2599999999998px;font-size:14px;letter-spacing:-0.2px;color:#2e1a00'>E01.01</div>
<div class='t' style='left:449.2px;top:535.2599999999998px;font-size:14px;letter-spacing:-0.2px;color:#2e1a00'>AR_0025_G 0</div>
<div class='t' style='left:568.4px;top:535.2599999999998px;font-size:14px;letter-spacing:-0.2px;color:#2e1a00'>Wand AR_0025_G 0</div>
<div class='t' style='left:801.2px;top:535.2599999999998px;font-size:14px;letter-spacing:-0.2px;color:#2e1a00'>IfcWall</div>
<div class='a' style='left:1082.3px;top:534.5599999999998px;width:16.5px;height:16.5px;border:1.6px solid #555;border-radius:1.5px;background:#fff'></div>
<div class='a' style='left:202px;top:554.1299999999998px;width:11px;height:22.77px;background:#efefef'></div>
<div class='a' style='left:213px;top:554.1299999999998px;width:1px;height:22.77px;background:#a9a9a9'></div>
<div class='a' style='left:214px;top:554.1299999999998px;width:20px;height:22.77px;background:#fff'></div>
<div class='a' style='left:233.8px;top:554.1299999999998px;width:967px;height:22.77px;background:#ff8c00'></div>
<div class='a' style='left:1074.5px;top:554.1299999999998px;width:32px;height:22.77px;background:#fff'></div>
<div class='a' style='left:384.2px;top:554.1299999999998px;width:1px;height:22.77px;background:#a9a9a9'></div>
<div class='a' style='left:447px;top:554.1299999999998px;width:1px;height:22.77px;background:#a9a9a9'></div>
<div class='a' style='left:566px;top:554.1299999999998px;width:1px;height:22.77px;background:#a9a9a9'></div>
<div class='a' style='left:798.5px;top:554.1299999999998px;width:1px;height:22.77px;background:#a9a9a9'></div>
<div class='a' style='left:886.7px;top:554.1299999999998px;width:1px;height:22.77px;background:#a9a9a9'></div>
<div class='a' style='left:1074px;top:554.1299999999998px;width:1px;height:22.77px;background:#a9a9a9'></div>
<div class='a' style='left:1106.7px;top:554.1299999999998px;width:1px;height:22.77px;background:#a9a9a9'></div>
<div class='t' style='left:236px;top:558.0299999999997px;font-size:14px;letter-spacing:-0.2px;color:#2e1a00'>B1.G00.E00020</div>
<div class='t' style='left:386.2px;top:558.0299999999997px;font-size:14px;letter-spacing:-0.2px;color:#2e1a00'>E01.01</div>
<div class='t' style='left:449.2px;top:558.0299999999997px;font-size:14px;letter-spacing:-0.2px;color:#2e1a00'>AR_0029_G 0</div>
<div class='t' style='left:568.4px;top:558.0299999999997px;font-size:14px;letter-spacing:-0.2px;color:#2e1a00'>Wand AR_0029_G 0</div>
<div class='t' style='left:801.2px;top:558.0299999999997px;font-size:14px;letter-spacing:-0.2px;color:#2e1a00'>IfcWall</div>
<div class='a' style='left:1082.3px;top:557.3299999999998px;width:16.5px;height:16.5px;border:1.6px solid #555;border-radius:1.5px;background:#fff'></div>
<div class='a' style='left:202px;top:576.8999999999997px;width:11px;height:22.77px;background:#efefef'></div>
<div class='a' style='left:213px;top:576.8999999999997px;width:1px;height:22.77px;background:#a9a9a9'></div>
<div class='a' style='left:214px;top:576.8999999999997px;width:20px;height:22.77px;background:#fff'></div>
<div class='a' style='left:233.8px;top:576.8999999999997px;width:967px;height:22.77px;background:#ff8c00'></div>
<div class='a' style='left:1074.5px;top:576.8999999999997px;width:32px;height:22.77px;background:#fff'></div>
<div class='a' style='left:384.2px;top:576.8999999999997px;width:1px;height:22.77px;background:#a9a9a9'></div>
<div class='a' style='left:447px;top:576.8999999999997px;width:1px;height:22.77px;background:#a9a9a9'></div>
<div class='a' style='left:566px;top:576.8999999999997px;width:1px;height:22.77px;background:#a9a9a9'></div>
<div class='a' style='left:798.5px;top:576.8999999999997px;width:1px;height:22.77px;background:#a9a9a9'></div>
<div class='a' style='left:886.7px;top:576.8999999999997px;width:1px;height:22.77px;background:#a9a9a9'></div>
<div class='a' style='left:1074px;top:576.8999999999997px;width:1px;height:22.77px;background:#a9a9a9'></div>
<div class='a' style='left:1106.7px;top:576.8999999999997px;width:1px;height:22.77px;background:#a9a9a9'></div>
<div class='t' style='left:236px;top:580.7999999999997px;font-size:14px;letter-spacing:-0.2px;color:#2e1a00'>B1.G00.E00022</div>
<div class='t' style='left:386.2px;top:580.7999999999997px;font-size:14px;letter-spacing:-0.2px;color:#2e1a00'>E01.01</div>
<div class='t' style='left:449.2px;top:580.7999999999997px;font-size:14px;letter-spacing:-0.2px;color:#2e1a00'>AR_0031_G 0</div>
<div class='t' style='left:568.4px;top:580.7999999999997px;font-size:14px;letter-spacing:-0.2px;color:#2e1a00'>Wand AR_0031_G 0</div>
<div class='t' style='left:801.2px;top:580.7999999999997px;font-size:14px;letter-spacing:-0.2px;color:#2e1a00'>IfcWall</div>
<div class='a' style='left:1082.3px;top:580.0999999999998px;width:16.5px;height:16.5px;border:1.6px solid #555;border-radius:1.5px;background:#fff'></div>
<div class='a' style='left:202px;top:599.6699999999997px;width:11px;height:22.77px;background:#efefef'></div>
<div class='a' style='left:213px;top:599.6699999999997px;width:1px;height:22.77px;background:#a9a9a9'></div>
<div class='a' style='left:214px;top:599.6699999999997px;width:20px;height:22.77px;background:#fff'></div>
<div class='a' style='left:233.8px;top:599.6699999999997px;width:967px;height:22.77px;background:#fffcb8'></div>
<div class='a' style='left:1074.5px;top:599.6699999999997px;width:32px;height:22.77px;background:#fff'></div>
<div class='a' style='left:384.2px;top:599.6699999999997px;width:1px;height:22.77px;background:#a9a9a9'></div>
<div class='a' style='left:447px;top:599.6699999999997px;width:1px;height:22.77px;background:#a9a9a9'></div>
<div class='a' style='left:566px;top:599.6699999999997px;width:1px;height:22.77px;background:#a9a9a9'></div>
<div class='a' style='left:798.5px;top:599.6699999999997px;width:1px;height:22.77px;background:#a9a9a9'></div>
<div class='a' style='left:886.7px;top:599.6699999999997px;width:1px;height:22.77px;background:#a9a9a9'></div>
<div class='a' style='left:1074px;top:599.6699999999997px;width:1px;height:22.77px;background:#a9a9a9'></div>
<div class='a' style='left:1106.7px;top:599.6699999999997px;width:1px;height:22.77px;background:#a9a9a9'></div>
<div class='t' style='left:236px;top:603.5699999999997px;font-size:14px;letter-spacing:-0.2px;color:#2a2a1a'>B1.G00.R00001.E01</div>
<div class='t' style='left:386.2px;top:603.5699999999997px;font-size:14px;letter-spacing:-0.2px;color:#2a2a1a'>E01.01</div>
<div class='t' style='left:449.2px;top:603.5699999999997px;font-size:14px;letter-spacing:-0.2px;color:#2a2a1a'>AR_0027_G 0</div>
<div class='t' style='left:568.4px;top:603.5699999999997px;font-size:14px;letter-spacing:-0.2px;color:#2a2a1a'>Wände AR_0027_G 0 in E0.01.001</div>
<div class='t' style='left:801.2px;top:603.5699999999997px;font-size:14px;letter-spacing:-0.2px;color:#2a2a1a'>IfcWall</div>
<div class='a' style='left:1082.3px;top:602.8699999999998px;width:16.5px;height:16.5px;border:1.6px solid #555;border-radius:1.5px;background:#fff'></div>
<div class='a' style='left:202px;top:622.4399999999997px;width:11px;height:22.77px;background:#efefef'></div>
<div class='a' style='left:213px;top:622.4399999999997px;width:1px;height:22.77px;background:#a9a9a9'></div>
<div class='a' style='left:214px;top:622.4399999999997px;width:20px;height:22.77px;background:#fff'></div>
<div class='a' style='left:233.8px;top:622.4399999999997px;width:967px;height:22.77px;background:#fffcb8'></div>
<div class='a' style='left:1074.5px;top:622.4399999999997px;width:32px;height:22.77px;background:#fff'></div>
<div class='a' style='left:384.2px;top:622.4399999999997px;width:1px;height:22.77px;background:#a9a9a9'></div>
<div class='a' style='left:447px;top:622.4399999999997px;width:1px;height:22.77px;background:#a9a9a9'></div>
<div class='a' style='left:566px;top:622.4399999999997px;width:1px;height:22.77px;background:#a9a9a9'></div>
<div class='a' style='left:798.5px;top:622.4399999999997px;width:1px;height:22.77px;background:#a9a9a9'></div>
<div class='a' style='left:886.7px;top:622.4399999999997px;width:1px;height:22.77px;background:#a9a9a9'></div>
<div class='a' style='left:1074px;top:622.4399999999997px;width:1px;height:22.77px;background:#a9a9a9'></div>
<div class='a' style='left:1106.7px;top:622.4399999999997px;width:1px;height:22.77px;background:#a9a9a9'></div>
<div class='t' style='left:236px;top:626.3399999999997px;font-size:14px;letter-spacing:-0.2px;color:#2a2a1a'>B1.G00.R00001.E02</div>
<div class='t' style='left:386.2px;top:626.3399999999997px;font-size:14px;letter-spacing:-0.2px;color:#2a2a1a'>E01.01</div>
<div class='t' style='left:449.2px;top:626.3399999999997px;font-size:14px;letter-spacing:-0.2px;color:#2a2a1a'>AR_0026_G 0</div>
<div class='t' style='left:568.4px;top:626.3399999999997px;font-size:14px;letter-spacing:-0.2px;color:#2a2a1a'>Wände AR_0026_G 0 in E0.01.001</div>
<div class='t' style='left:801.2px;top:626.3399999999997px;font-size:14px;letter-spacing:-0.2px;color:#2a2a1a'>IfcWall</div>
<div class='a' style='left:1082.3px;top:625.6399999999998px;width:16.5px;height:16.5px;border:1.6px solid #555;border-radius:1.5px;background:#fff'></div>
<div class='a' style='left:202px;top:645.2099999999997px;width:11px;height:22.77px;background:#efefef'></div>
<div class='a' style='left:213px;top:645.2099999999997px;width:1px;height:22.77px;background:#a9a9a9'></div>
<div class='a' style='left:214px;top:645.2099999999997px;width:20px;height:22.77px;background:#fff'></div>
<div class='a' style='left:233.8px;top:645.2099999999997px;width:967px;height:22.77px;background:#fffcb8'></div>
<div class='a' style='left:1074.5px;top:645.2099999999997px;width:32px;height:22.77px;background:#fff'></div>
<div class='a' style='left:384.2px;top:645.2099999999997px;width:1px;height:22.77px;background:#a9a9a9'></div>
<div class='a' style='left:447px;top:645.2099999999997px;width:1px;height:22.77px;background:#a9a9a9'></div>
<div class='a' style='left:566px;top:645.2099999999997px;width:1px;height:22.77px;background:#a9a9a9'></div>
<div class='a' style='left:798.5px;top:645.2099999999997px;width:1px;height:22.77px;background:#a9a9a9'></div>
<div class='a' style='left:886.7px;top:645.2099999999997px;width:1px;height:22.77px;background:#a9a9a9'></div>
<div class='a' style='left:1074px;top:645.2099999999997px;width:1px;height:22.77px;background:#a9a9a9'></div>
<div class='a' style='left:1106.7px;top:645.2099999999997px;width:1px;height:22.77px;background:#a9a9a9'></div>
<div class='t' style='left:236px;top:649.1099999999997px;font-size:14px;letter-spacing:-0.2px;color:#2a2a1a'>B1.G00.R00002.E01</div>
<div class='t' style='left:386.2px;top:649.1099999999997px;font-size:14px;letter-spacing:-0.2px;color:#2a2a1a'>E01.01</div>
<div class='t' style='left:449.2px;top:649.1099999999997px;font-size:14px;letter-spacing:-0.2px;color:#2a2a1a'>AR_0028_G 0</div>
<div class='t' style='left:568.4px;top:649.1099999999997px;font-size:14px;letter-spacing:-0.2px;color:#2a2a1a'>Wände AR_0028_G 0 in E0.01.002</div>
<div class='t' style='left:801.2px;top:649.1099999999997px;font-size:14px;letter-spacing:-0.2px;color:#2a2a1a'>IfcWall</div>
<div class='a' style='left:1082.3px;top:648.4099999999997px;width:16.5px;height:16.5px;border:1.6px solid #555;border-radius:1.5px;background:#fff'></div>
<div class='a' style='left:202px;top:667.9799999999997px;width:11px;height:22.77px;background:#efefef'></div>
<div class='a' style='left:213px;top:667.9799999999997px;width:1px;height:22.77px;background:#a9a9a9'></div>
<div class='a' style='left:214px;top:667.9799999999997px;width:20px;height:22.77px;background:#fff'></div>
<div class='a' style='left:233.8px;top:667.9799999999997px;width:967px;height:22.77px;background:#fffcb8'></div>
<div class='a' style='left:1074.5px;top:667.9799999999997px;width:32px;height:22.77px;background:#fff'></div>
<div class='a' style='left:384.2px;top:667.9799999999997px;width:1px;height:22.77px;background:#a9a9a9'></div>
<div class='a' style='left:447px;top:667.9799999999997px;width:1px;height:22.77px;background:#a9a9a9'></div>
<div class='a' style='left:566px;top:667.9799999999997px;width:1px;height:22.77px;background:#a9a9a9'></div>
<div class='a' style='left:798.5px;top:667.9799999999997px;width:1px;height:22.77px;background:#a9a9a9'></div>
<div class='a' style='left:886.7px;top:667.9799999999997px;width:1px;height:22.77px;background:#a9a9a9'></div>
<div class='a' style='left:1074px;top:667.9799999999997px;width:1px;height:22.77px;background:#a9a9a9'></div>
<div class='a' style='left:1106.7px;top:667.9799999999997px;width:1px;height:22.77px;background:#a9a9a9'></div>
<div class='t' style='left:236px;top:671.8799999999997px;font-size:14px;letter-spacing:-0.2px;color:#2a2a1a'>B1.G00.R00003.E02</div>
<div class='t' style='left:386.2px;top:671.8799999999997px;font-size:14px;letter-spacing:-0.2px;color:#2a2a1a'>E01.01</div>
<div class='t' style='left:449.2px;top:671.8799999999997px;font-size:14px;letter-spacing:-0.2px;color:#2a2a1a'>AR_0021_G 0</div>
<div class='t' style='left:568.4px;top:671.8799999999997px;font-size:14px;letter-spacing:-0.2px;color:#2a2a1a'>Wände AR_0021_G 0 in E0.01.003</div>
<div class='t' style='left:801.2px;top:671.8799999999997px;font-size:14px;letter-spacing:-0.2px;color:#2a2a1a'>IfcWall</div>
<div class='a' style='left:1082.3px;top:671.1799999999997px;width:16.5px;height:16.5px;border:1.6px solid #555;border-radius:1.5px;background:#fff'></div>
<div class='a' style='left:202px;top:326.06999999999994px;width:998px;height:1px;background:#a9a9a9'></div>
<div class='a' style='left:202px;top:348.8399999999999px;width:998px;height:1px;background:#a9a9a9'></div>
<div class='a' style='left:202px;top:371.6099999999999px;width:998px;height:1px;background:#a9a9a9'></div>
<div class='a' style='left:202px;top:394.3799999999999px;width:998px;height:1px;background:#a9a9a9'></div>
<div class='a' style='left:202px;top:462.54999999999984px;width:998px;height:1px;background:#a9a9a9'></div>
<div class='a' style='left:202px;top:485.3199999999998px;width:998px;height:1px;background:#a9a9a9'></div>
<div class='a' style='left:202px;top:508.0899999999998px;width:998px;height:1px;background:#a9a9a9'></div>
<div class='a' style='left:202px;top:530.8599999999998px;width:998px;height:1px;background:#a9a9a9'></div>
<div class='a' style='left:202px;top:553.6299999999998px;width:998px;height:1px;background:#a9a9a9'></div>
<div class='a' style='left:202px;top:576.3999999999997px;width:998px;height:1px;background:#a9a9a9'></div>
<div class='a' style='left:202px;top:599.1699999999997px;width:998px;height:1px;background:#a9a9a9'></div>
<div class='a' style='left:202px;top:621.9399999999997px;width:998px;height:1px;background:#a9a9a9'></div>
<div class='a' style='left:202px;top:644.7099999999997px;width:998px;height:1px;background:#a9a9a9'></div>
<div class='a' style='left:202px;top:667.4799999999997px;width:998px;height:1px;background:#a9a9a9'></div>
<div class='a' style='left:202px;top:690.2499999999997px;width:998px;height:1px;background:#a9a9a9'></div>
</body></html>
